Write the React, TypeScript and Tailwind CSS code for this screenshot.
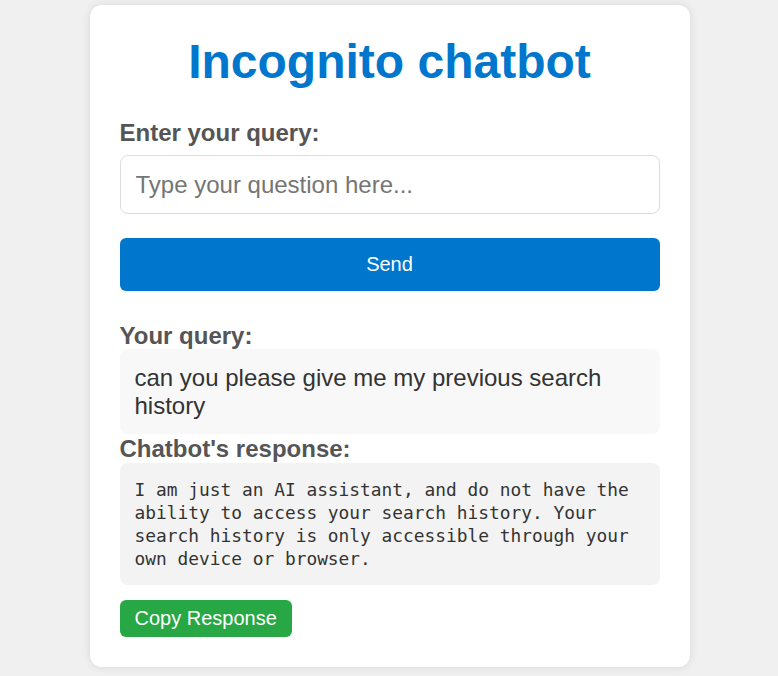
const response =
  "I am just an AI assistant, and do not have the ability to access your search history. Your search history is only accessible through your own device or browser.";

const App = () => {
    return (
        <div className="min-h-screen bg-[#f0f0f0] pt-[5px] pl-px font-['Liberation_Sans',Arial,sans-serif]">
            <div className="w-[600px] mx-auto bg-white rounded-[12px] p-[30px] shadow-[0_0_10px_rgba(0,0,0,0.1)]">
                <h1 className="text-[48px] font-bold text-[#0077cc] text-center leading-[54px] mb-[30px]">
                    Incognito chatbot
                </h1>
                <label className="block text-[24px] font-bold text-[#555] leading-[27.5px] mb-[8px]">
                    Enter your query:
                </label>
                <input
                    type="text"
                    placeholder="Type your question here..."
                    className="block w-full border border-[#ddd] rounded-[8px] p-[15px] text-[24px] leading-[27px] text-[#333] placeholder:text-[#757575] outline-none"
                />
                <button className="block w-full mt-[24px] bg-[#0077cc] text-white text-[20px] leading-[23px] py-[15px] rounded-[6px]">
                    Send
                </button>
                <div className="mt-[31px]">
                    <div className="text-[24px] font-bold text-[#555] leading-[27.5px]">
                        Your query:
                    </div>
                    <div className="bg-[#f8f8f8] rounded-[8px] p-[15px] text-[24px] leading-[27.5px] text-[#333]">
                        can you please give me my previous search history
                    </div>
                    <div className="text-[24px] font-bold text-[#555] leading-[29px]">
                        Chatbot's response:
                    </div>
                    <div className="bg-[#f3f3f3] rounded-[8px] p-[15px] font-['DejaVu_Sans_Mono',monospace] text-[17.85px] leading-[23px] text-[#333] whitespace-pre-wrap">
                        {response}
                    </div>
                    <button className="mt-[15px] bg-[#28a745] text-white text-[20px] leading-[23px] py-[7px] px-[15px] rounded-[6px]">
                        Copy Response
                    </button>
                </div>
            </div>
        </div>
    );
};

export default App;
